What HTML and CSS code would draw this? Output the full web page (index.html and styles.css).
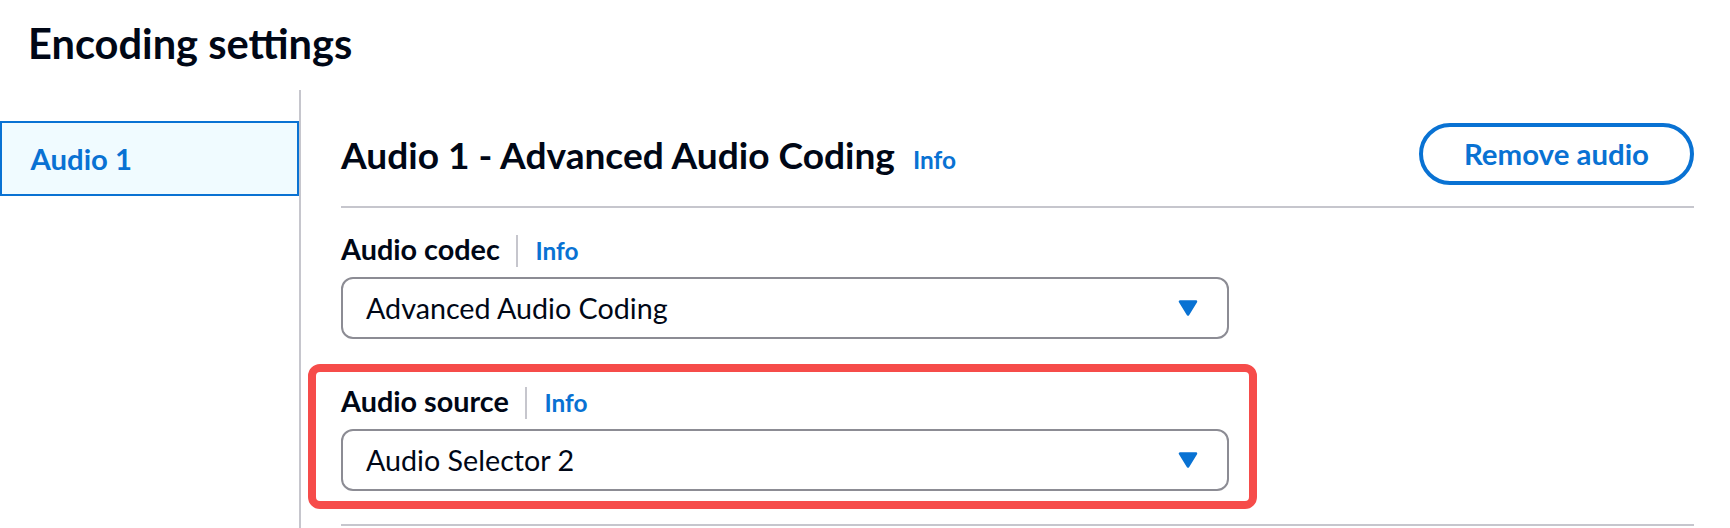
FILE: index.html
```html
<!DOCTYPE html>
<html lang="en">
<head>
<meta charset="utf-8">
<title>Encoding settings</title>
<link rel="stylesheet" href="styles.css">
</head>
<body>
<div class="page">
  <h1 class="title">Encoding settings</h1>
  <div class="layout">
    <nav class="side">
      <div class="side-item">Audio 1</div>
    </nav>
    <main class="content">
      <div class="content-header">
        <h2 class="heading">Audio 1 - Advanced Audio Coding<a class="info info-heading">Info</a></h2>
        <button class="btn">Remove audio</button>
      </div>

      <div class="field field-first">
        <div class="label-row">
          <span class="label">Audio codec</span>
          <span class="sep"></span>
          <a class="info info-label">Info</a>
        </div>
        <div class="select">
          <span class="select-value">Advanced Audio Coding</span>
          <svg class="caret" width="20" height="16" viewBox="0 0 20 16" aria-hidden="true"><polygon points="2,1.5 18,1.5 10,14.5" fill="#0972d3" stroke="#0972d3" stroke-width="2.5" stroke-linejoin="round"/></svg>
        </div>
      </div>

      <div class="field field-highlight">
        <div class="label-row">
          <span class="label">Audio source</span>
          <span class="sep"></span>
          <a class="info info-label">Info</a>
        </div>
        <div class="select">
          <span class="select-value">Audio Selector 2</span>
          <svg class="caret" width="20" height="16" viewBox="0 0 20 16" aria-hidden="true"><polygon points="2,1.5 18,1.5 10,14.5" fill="#0972d3" stroke="#0972d3" stroke-width="2.5" stroke-linejoin="round"/></svg>
        </div>
      </div>

      <div class="rule"></div>
    </main>
  </div>
</div>
</body>
</html>
```
FILE: styles.css
```css
html, body {
  margin: 0;
  padding: 0;
  background: #ffffff;
}

body {
  font-family: Lato, "Liberation Sans", sans-serif;
  color: #000716;
  height: 528px;
  overflow: hidden;
}

.page {
  padding-top: 19px;
}

.title {
  margin: 0;
  padding-left: 28px;
  font-size: 41.6px;
  line-height: 48.7px;
  font-weight: 700;
}

.layout {
  margin-top: 22.3px;
  display: grid;
  grid-template-columns: 299px 1fr;
  height: 440px;
}

.side {
  padding-top: 31px;
}

.side-item {
  box-sizing: border-box;
  height: 74.6px;
  border: 2px solid #0972d3;
  background: #f0fbff;
  color: #0972d3;
  font-weight: 700;
  font-size: 29.3px;
  line-height: 40.6px;
  padding: 16px 0 14px 28.5px;
}

.content {
  border-left: 2px solid #c6c6cd;
  padding: 33px 36px 0 40px;
}

.content-header {
  display: flex;
  align-items: center;
  justify-content: space-between;
  padding-bottom: 21px;
  border-bottom: 2px solid #c6c6cd;
}

.heading {
  margin: 0;
  padding-top: 8px;
  font-size: 37.1px;
  line-height: 44.7px;
  font-weight: 700;
}

.info {
  color: #0972d3;
  font-weight: 700;
  font-size: 24.4px;
  text-decoration: none;
}

.info-heading {
  margin-left: 18px;
}

.info-label {
  line-height: 37px;
}

.btn {
  box-sizing: border-box;
  height: 62px;
  border: 4px solid #0972d3;
  border-radius: 31px;
  background: #ffffff;
  color: #0972d3;
  font-family: Lato, "Liberation Sans", sans-serif;
  font-weight: 700;
  font-size: 29.4px;
  line-height: 40.6px;
  padding: 0 41px;
}

.field {
  width: 888px;
}

.field-first {
  margin-top: 19px;
}

.field-highlight {
  margin-top: 40px;
  position: relative;
}

.field-highlight::after {
  content: "";
  position: absolute;
  top: -15px;
  left: -33px;
  right: -28px;
  bottom: -18px;
  border: 8px solid #f64c4a;
  border-radius: 12px;
  pointer-events: none;
}

.label-row {
  display: flex;
  align-items: baseline;
  height: 40.6px;
  padding-top: 2px;
  line-height: 40.6px;
}

.label {
  font-weight: 700;
  font-size: 28.8px;
}

.sep {
  align-self: center;
  width: 2px;
  height: 32px;
  background: #c6c6cd;
  margin: 4px 17px 0 16.5px;
}

.select {
  box-sizing: border-box;
  margin-top: 7px;
  height: 62.6px;
  border: 2px solid #8c8c94;
  border-radius: 12px;
  display: flex;
  align-items: center;
  justify-content: space-between;
  padding: 0 29px 0 23px;
}

.select-value {
  font-size: 28.7px;
  line-height: 40.6px;
}

.caret {
  display: block;
}

.rule {
  margin-top: 33px;
  height: 2px;
  background: #c6c6cd;
}
```
